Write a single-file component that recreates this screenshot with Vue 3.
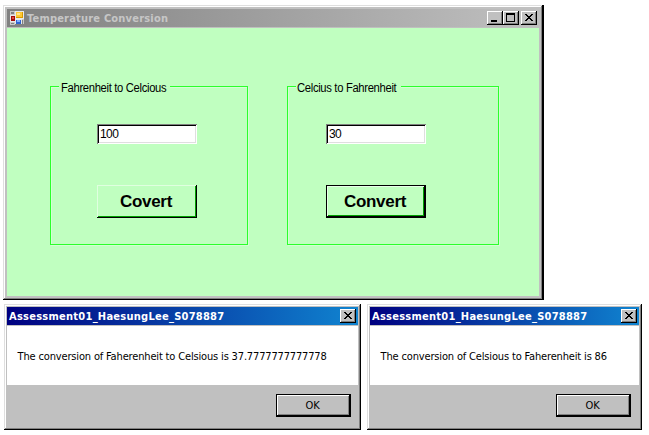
<script setup>
import { ref } from 'vue'

const groups = ref([
  { legend: 'Fahrenheit to Celcious', value: '100', action: 'Covert', kind: 'first' },
  { legend: 'Celcius to Fahrenheit', value: '30', action: 'Convert', kind: 'second' },
])
const dialogs = [
  { kind: 'wide', text: 'The conversion of Faherenheit to Celsious is 37.7777777777778' },
  { kind: 'narrow', text: 'The conversion of Celsious to Faherenheit is 86' },
]
</script>

<template>
  <main class="desktop">
    <section class="window app">
      <header class="bar inactive">
        <svg class="logo" width="14" height="14" viewBox="0 0 14 14" shape-rendering="crispEdges">
          <path fill="#c8c8c8" d="M0 0h5v14H0zM5 13h9V8h-3v5z" />
          <path fill="#808080" d="M1 1h3v2H1zM1 12h3v1H1zM12 9h1v4h-1z" />
          <path fill="#e8e8e8" d="M5 0h9v8H5zM0 4h6v7H0zM5 8h7v5H5z" />
          <path fill="#d99a00" d="M6 1h7v6H6z" />
          <path fill="#ffc832" d="M6 1h6v5H6z" />
          <path fill="#ffe48a" d="M7 2h3v2H7z" />
          <path fill="#a50b0b" d="M1 5h4v5H1z" />
          <path fill="#e04a3c" d="M2 6h2v2H2z" />
          <path fill="#2f63d0" d="M6 9h5v4H6z" />
          <path fill="#80b0ff" d="M7 9h3v2H7z" />
        </svg>
        <h1 class="title">Temperature Conversion</h1>
        <button class="cap" aria-label="Minimize">
          <svg width="16" height="14" shape-rendering="crispEdges"><path d="M4 9h6v2H4z" /></svg>
        </button>
        <button class="cap" aria-label="Maximize">
          <svg width="16" height="14" shape-rendering="crispEdges"><path fill-rule="evenodd" d="M3 2h9v9H3zM4 4v6h7V4z" /></svg>
        </button>
        <button class="cap close" aria-label="Close">
          <svg width="16" height="14" shape-rendering="crispEdges">
            <path d="M4 3h2v1H4zM10 3h2v1h-2zM5 4h2v1H5zM9 4h2v1H9zM6 5h4v1H6zM7 6h2v1H7zM6 7h4v1H6zM5 8h2v1H5zM9 8h2v1H9zM4 9h2v1H4zM10 9h2v1h-2z" />
          </svg>
        </button>
      </header>
      <div class="form">
        <section v-for="g in groups" :key="g.kind" class="group" :class="g.kind">
          <h2 class="legend"><span>{{ g.legend }}</span></h2>
          <input v-model="g.value" class="field" :aria-label="g.legend" />
          <button class="convert">{{ g.action }}</button>
        </section>
      </div>
    </section>

    <div class="messages">
      <section v-for="d in dialogs" :key="d.kind" class="window dialog" :class="d.kind">
        <header class="bar active">
          <h1 class="title">Assessment01_HaesungLee_S078887</h1>
          <button class="cap close" aria-label="Close">
            <svg width="16" height="14" shape-rendering="crispEdges">
              <path d="M4 3h2v1H4zM10 3h2v1h-2zM5 4h2v1H5zM9 4h2v1H9zM6 5h4v1H6zM7 6h2v1H7zM6 7h4v1H6zM5 8h2v1H5zM9 8h2v1H9zM4 9h2v1H4zM10 9h2v1h-2z" />
            </svg>
          </button>
        </header>
        <p class="message"><span>{{ d.text }}</span></p>
        <footer class="actions"><button class="ok">OK</button></footer>
      </section>
    </div>
  </main>
</template>

<style>
body {
  background: #fff;
}
</style>

<style scoped>
* {
  box-sizing: border-box;
  margin: 0;
}
.desktop {
  width: 649px;
  height: 435px;
  padding: 5px 0 0 3px;
  overflow: hidden;
  font-family: "DejaVu Sans Condensed", "DejaVu Sans", sans-serif;
  color: #000;
}
.window {
  display: flex;
  flex-direction: column;
  background: #c0c0c0;
}
.app {
  width: 541px;
  height: 295px;
  padding: 4px 5px 4px 4px;
  box-shadow: inset -2px -1px #000, inset 1px 1px #dfdfdf, inset -3px -2px #808080, inset 2px 2px #fff;
}
.bar {
  display: flex;
  align-items: center;
  height: 18px;
  flex: none;
  padding-right: 2px;
}
.inactive {
  background: linear-gradient(90deg, #808080, #c0c0c0);
  color: #c6c6c6;
  padding-left: 3px;
}
.active {
  background: linear-gradient(90deg, #000080, #1084d0);
  color: #fff;
  padding-left: 2px;
}
.logo {
  margin-right: 3px;
}
.title {
  flex: 1;
  font-family: "DejaVu Sans Condensed", "DejaVu Sans", sans-serif;
  font-stretch: condensed;
  font-size: 11px;
  font-weight: 700;
  line-height: 18px;
  padding-top: 1px;
  letter-spacing: 0.2px;
  white-space: nowrap;
}
.active .title {
  letter-spacing: 0.26px;
}
button {
  border: 0;
  border-radius: 0;
  padding: 0;
  color: #000;
}
.cap {
  width: 16px;
  height: 14px;
  background: #c0c0c0;
  box-shadow: inset -1px -1px #000, inset 1px 1px #fff, inset -2px -2px #808080;
}
.cap svg {
  display: block;
}
.app .close {
  margin-left: 2px;
}
.form {
  flex: 1;
  display: flex;
  align-items: flex-start;
  gap: 39px;
  margin-top: 1px;
  padding: 58px 0 0 43px;
  background: #c0ffc0;
}
.group {
  display: flex;
  flex-direction: column;
  align-items: flex-start;
  height: 159px;
  border: 1px solid #2bff2b;
  box-shadow: 1px 1px #d2ffd2, inset 1px 1px #d2ffd2;
}
.first {
  width: 198px;
  padding-left: 46px;
}
.second {
  width: 212px;
  padding-left: 38px;
}
.legend {
  height: 14px;
  margin-top: -7px;
  background: #c0ffc0;
  font: 400 12px/16px "Liberation Sans", sans-serif;
  letter-spacing: -0.35px;
  white-space: nowrap;
}
.legend span {
  display: inline-block;
  transform: scaleX(0.937);
  transform-origin: 0 50%;
}
.first .legend {
  width: 111px;
  margin-left: -38px;
  padding-left: 2px;
}
.second .legend {
  width: 105px;
  margin-left: -30px;
  padding-left: 1px;
}
.field {
  width: 100px;
  height: 20px;
  margin-top: 30px;
  padding: 0 3px;
  border: 0;
  border-radius: 0;
  outline: 0;
  background: #fff;
  box-shadow: inset 1px 1px #808080, inset -1px -1px #fff, inset 2px 2px #000, inset -2px -2px #dfdfdf;
  font: 12px/20px "Liberation Sans", sans-serif;
  letter-spacing: -0.6px;
  color: #000;
}
.convert {
  width: 100px;
  height: 33px;
  margin-top: 41px;
  background: #c0ffc0;
  box-shadow: inset -1px -1px #000, inset 1px 1px #e0ffe0, inset -2px -2px #00a000;
  font: 700 17px/33px "Liberation Sans", sans-serif;
  letter-spacing: -0.3px;
  padding-right: 2px;
}
.second .convert {
  box-shadow: inset 0 0 0 1px #000, inset -2px -2px #000, inset 2px 2px #e8ffe8, inset -3px -3px #00a000;
}
.messages {
  display: flex;
  gap: 6px;
  margin: 4px 0 0 1px;
}
.dialog {
  height: 126px;
  padding: 3px;
  box-shadow: inset -1px -1px #000, inset 1px 1px #dfdfdf, inset -2px -2px #808080, inset 2px 2px #fff;
}
.wide {
  width: 357px;
}
.narrow {
  width: 275px;
}
.message {
  height: 59px;
  margin-top: 1px;
  padding: 22px 0 0 10.6px;
  background: #fff;
  font-size: 11px;
  font-stretch: condensed;
  letter-spacing: -0.16px;
  line-height: 18px;
  white-space: nowrap;
}
.actions {
  display: flex;
  justify-content: flex-end;
  padding: 9px 7px 0 0;
}
.narrow .actions {
  padding-right: 8px;
}
.ok {
  width: 75px;
  height: 23px;
  background: #c0c0c0;
  box-shadow: inset 0 0 0 1px #000, inset -2px -2px #000, inset 2px 2px #fff, inset -3px -3px #808080;
  font: 11px/22px "DejaVu Sans Condensed", "DejaVu Sans", sans-serif;
  letter-spacing: -0.2px;
  padding-right: 2px;
}
</style>
